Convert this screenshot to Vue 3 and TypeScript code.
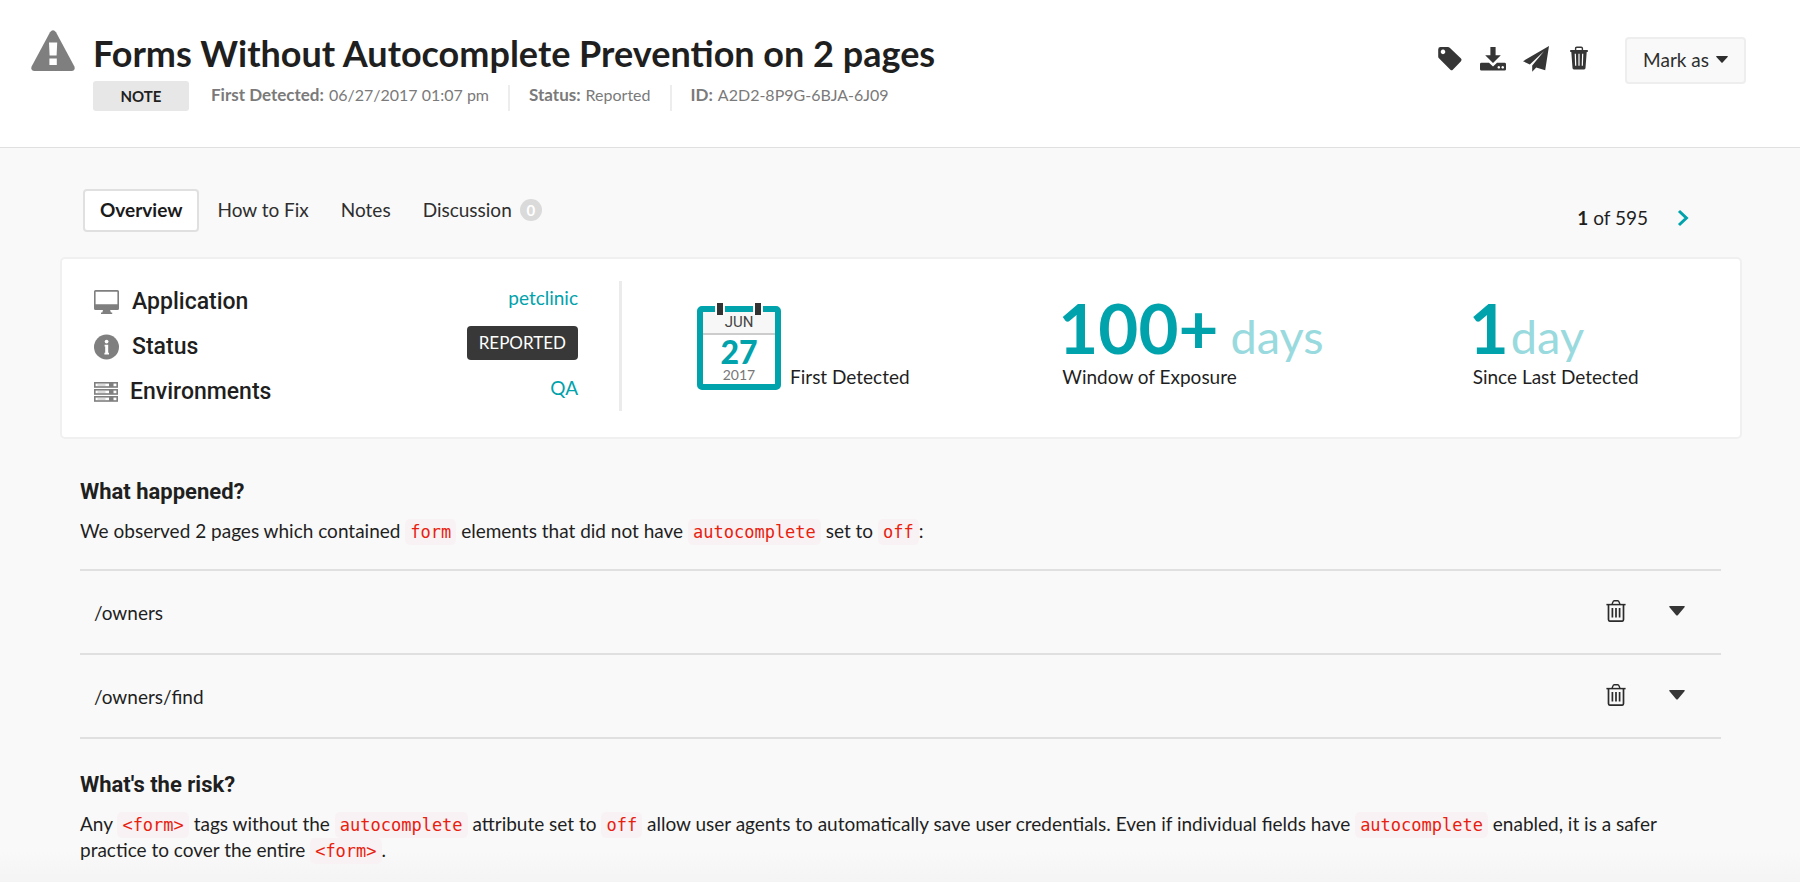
<script setup lang="ts">
import { ref } from 'vue'

interface Tab { id: string; label: string; count?: number }
interface Meta { label: string; value: string }

const tabs: Tab[] = [
  { id: 'overview', label: 'Overview' },
  { id: 'fix', label: 'How to Fix' },
  { id: 'notes', label: 'Notes' },
  { id: 'discussion', label: 'Discussion', count: 0 },
]
const active = ref('overview')

const meta: Meta[] = [
  { label: 'First Detected:', value: '06/27/2017 01:07 pm' },
  { label: 'Status:', value: 'Reported' },
  { label: 'ID:', value: 'A2D2-8P9G-6BJA-6J09' },
]
const paths: string[] = ['/owners', '/owners/find']
</script>

<template>
  <div class="page">
    <header class="header">
      <svg class="warn" viewBox="0 0 44 41" aria-hidden="true">
        <path d="M19 2.2Q22-1.6 25 2.2L43.4 36.6Q44.6 40.6 41 41H3Q-.6 40.6.6 36.6Z" fill="#7f7f7f" />
        <path d="M18 12.400h8.200l-.6 13.200h-7zM18.400 28.400h7.400v6.600h-7.400z" fill="#fff" />
      </svg>
      <div class="heading">
        <h1>Forms Without Autocomplete Prevention on 2 pages</h1>
        <div class="sub">
          <span class="severity">NOTE</span>
          <dl class="meta">
            <div v-for="m in meta" :key="m.label">
              <dt>{{ m.label }}</dt>
              <dd>{{ m.value }}</dd>
            </div>
          </dl>
        </div>
      </div>
      <div class="tools">
        <button type="button" class="icon" aria-label="Tag">
          <svg viewBox="0 0 26 26" width="26" height="26"><path fill-rule="evenodd" d="M3.6 1h7.2q1.2 0 2.2 1L24 12.6q1.2 1.3 0 2.6l-8.2 8.6q-1.2 1.1-2.4 0L2.2 12.6q-1-1-1-2.2V3.4Q1.2 1 3.6 1zM6 3.6a2.3 2.3 0 1 0 .01 0z" fill="#363636" /></svg>
        </button>
        <button type="button" class="icon" aria-label="Download">
          <svg viewBox="0 0 26 26" width="26" height="26">
            <path d="M10.400 1h5.200v8.200h5.200L13 17 5.200 9.200h5.200z" fill="#363636" />
            <path fill-rule="evenodd" d="M1.400 16.800H9l4 3.600 4-3.600h7.600q1.400 0 1.400 1.400v5Q26 24.600 24.600 24.600H1.400Q0 24.600 0 23.200v-5q0-1.400 1.400-1.400zM18.800 20a1.300 1.300 0 1 0 .01 0zM22.700 20a1.300 1.300 0 1 0 .01 0z" fill="#363636" />
          </svg>
        </button>
        <button type="button" class="icon" aria-label="Send">
          <svg viewBox="0 0 26 26" width="26" height="26"><path d="M26 0L0 15.200l6.800 3.200L21.200 5 9.200 19.600v6.200l4-4.200 9 2.600z" fill="#363636" /></svg>
        </button>
        <button type="button" class="icon" aria-label="Delete">
          <svg viewBox="0 0 26 26" width="26" height="26">
            <path d="M9.600 4V2.400q0-1.200 1.200-1.200h4.400q1.200 0 1.200 1.200V4" fill="none" stroke="#363636" stroke-width="1.400" />
            <path d="M4.200 4h17.600v1.900h-1.100l-1.200 16.200q-.1 1.300-1.400 1.300H7.900q-1.300 0-1.400-1.300L5.300 5.900H4.200z" fill="#363636" />
            <path d="M9.300 7.800l.4 12M13 7.800v12M16.700 7.800l-.4 12" stroke="#fff" stroke-width="1.200" />
          </svg>
        </button>
      </div>
      <button type="button" class="mark">
        Mark as
        <svg viewBox="0 0 12 7" width="12" height="7" aria-hidden="true"><path d="M.6 0h10.800q.8.400.2 1L6.600 6.500q-.6.500-1.200 0L.4 1Q-.2.400.6 0z" fill="#2e2e2e" /></svg>
      </button>
    </header>

    <main class="body">
      <div class="bar">
        <nav class="tabs" aria-label="Sections">
          <button
            v-for="t in tabs"
            :key="t.id"
            type="button"
            :class="['tab', { on: active === t.id }]"
            @click="active = t.id"
          >
            {{ t.label }}<span v-if="t.count !== undefined" class="count">{{ t.count }}</span>
          </button>
        </nav>
        <div class="pager">
          <span><b>1</b> of 595</span>
          <button type="button" class="next" aria-label="Next">
            <svg viewBox="0 0 12 18" width="12" height="18"><path d="M2 2l7.400 7L2 16" fill="none" stroke="#00a2ab" stroke-width="3" /></svg>
          </button>
        </div>
      </div>

      <section class="card">
        <dl class="facts">
          <div>
            <dt>
              <svg viewBox="0 0 26 24" width="26" height="24" aria-hidden="true">
                <path fill-rule="evenodd" d="M1.500 0h22q1.500 0 1.500 1.500v17q0 1.500-1.500 1.500h-7.400l.8 2.400h1.300V24H7v-1.600h1.300L9 20H1.500Q0 20 0 18.500v-17Q0 0 1.500 0zM1.600 1.700v12.600h21.800V1.700z" fill="#7f7f7f" />
              </svg>
              Application
            </dt>
            <dd><a href="#">petclinic</a></dd>
          </div>
          <div>
            <dt>
              <svg viewBox="0 0 26 26" width="26" height="26" aria-hidden="true">
                <circle cx="12.500" cy="13" r="12.500" fill="#7f7f7f" />
                <circle cx="12.600" cy="7.600" r="1.900" fill="#fff" />
                <path d="M10.600 10.800h3.600v8h.8v1.600h-4.600v-1.600h.8v-6.400h-.6z" fill="#fff" />
              </svg>
              Status
            </dt>
            <dd><span class="state">REPORTED</span></dd>
          </div>
          <div>
            <dt>
              <svg viewBox="0 0 24 20" width="24" height="20" aria-hidden="true">
                <g v-for="y in [0, 7, 14]" :key="y">
                  <rect x=".8" :y="y + 0.8" width="22.400" height="4.200" fill="#fff" stroke="#7f7f7f" stroke-width="1.600" />
                  <path :d="`M3.500 ${y + 3}h8`" stroke="#b8b8b8" stroke-width="1" />
                  <rect x="15" :y="y + 1" width="4.500" height="4" fill="#7f7f7f" />
                </g>
              </svg>
              Environments
            </dt>
            <dd><a href="#">QA</a></dd>
          </div>
        </dl>
        <div class="stats">
          <div class="stat first">
            <div class="calendar">
              <i class="ring"></i><i class="ring right"></i>
              <span class="month">JUN</span>
              <span class="day">27</span>
              <span class="year">2017</span>
            </div>
            <span class="caption">First Detected</span>
          </div>
          <div class="stat">
            <div class="figure"><strong>100+</strong><span class="wide">days</span></div>
            <span class="caption">Window of Exposure</span>
          </div>
          <div class="stat">
            <div class="figure"><strong>1</strong><span>day</span></div>
            <span class="caption">Since Last Detected</span>
          </div>
        </div>
      </section>

      <section class="text">
        <h2>What happened?</h2>
        <p>We observed 2 pages which contained <code>form</code> elements that did not have <code>autocomplete</code> set to <code>off</code>:</p>
        <ul class="paths">
          <li v-for="p in paths" :key="p">
            <span class="path">{{ p }}</span>
            <button type="button" class="row-btn" :aria-label="`Delete ${p}`">
              <svg viewBox="0 0 20 22" width="20" height="22">
                <g fill="none" stroke="#2b2b2b">
                  <path d="M.4 4.600h19.200" stroke-width="1.500" />
                  <path d="M6 4.400l1-2.600q.3-1 1.300-1h3.400q1 0 1.300 1l1 2.600" stroke-width="1.400" />
                  <path d="M2.500 4.600v14.800q0 1.800 1.800 1.800h11.400q1.800 0 1.800-1.800V4.600" stroke-width="1.700" />
                  <path d="M6.400 8v9.400M10 8v9.400M13.600 8v9.400" stroke-width="1.700" />
                </g>
              </svg>
            </button>
            <button type="button" class="row-btn" :aria-label="`Expand ${p}`">
              <svg viewBox="0 0 16 10" width="16" height="10"><path d="M.8 0h14.400q1 .5.300 1.300L8.800 9.200q-.8.700-1.600 0L.5 1.300Q-.2.500.8 0z" fill="#363636" /></svg>
            </button>
          </li>
        </ul>
        <h2>What's the risk?</h2>
        <p>Any <code>&lt;form&gt;</code> tags without the <code>autocomplete</code> attribute set to <code>off</code> allow user agents to automatically save user credentials. Even if individual fields have <code>autocomplete</code> enabled, it is a safer practice to cover the entire <code>&lt;form&gt;</code>.</p>
      </section>
    </main>
  </div>
</template>

<style>
body { margin: 0; background: #f9f9f9; }
</style>

<style scoped>
* { box-sizing: border-box; }
.page {
  display: flex;
  flex-direction: column;
  min-height: 100vh;
  font-family: Lato, "Liberation Sans", sans-serif;
  font-size: 19px;
  line-height: 26px;
  color: #1f1f1f;
}
h1, h2, p, dl, dd, ul { margin: 0; padding: 0; }
button { padding: 0; border: 0; background: none; font: inherit; color: inherit; cursor: pointer; }
svg { display: block; flex: none; }
a { color: #00a2ab; text-decoration: none; }

.header {
  display: flex;
  align-items: flex-start;
  padding: 30px 54px 36px 31px;
  background: #fff;
  border-bottom: 1px solid #e0e0e0;
}
.warn { width: 44px; height: 41px; margin-right: 18px; }
.heading { flex: 1; }
h1 { font-size: 36px; line-height: 46px; font-weight: 700; }
.sub { display: flex; margin-top: 5px; }
.severity {
  width: 96px;
  height: 30px;
  border-radius: 3px;
  background: #e7e7e7;
  font-size: 15px;
  line-height: 30px;
  font-weight: 700;
  text-align: center;
}
.meta { display: flex; margin: 4px 0 0 22px; font-size: 16px; line-height: 19px; color: #7a7a7a; }
.meta div { display: flex; align-items: baseline; gap: 5px; padding-right: 19px; }
.meta div + div { padding-left: 19px; border-left: 2px solid #ededed; }
.meta dt { font-size: 17px; font-weight: 700; }
.tools { display: flex; gap: 17px; margin: 16px 33px 0 0; }
.icon { width: 26px; height: 26px; }
.mark {
  display: flex;
  align-items: center;
  gap: 7px;
  height: 47px;
  margin-top: 7px;
  padding: 0 16px 2px;
  border: 2px solid #eee;
  border-radius: 4px;
  background: #f9f9f9;
  color: #2e2e2e;
}

.body { flex: 1; padding: 41px 58px 20px 60px; background: linear-gradient(to top, #f4f4f4, #f9f9f9 32px); }
.bar { display: flex; justify-content: space-between; padding: 0 53px 0 23px; }
.tabs { display: flex; }
.tab { display: flex; align-items: center; height: 43px; padding: 0 16px 2px; color: #2e2e2e; }
.tab.on { margin-right: 2px; padding: 0 15px 2px; border: 2px solid #e0e0e0; border-radius: 4px; background: #fff; font-weight: 700; color: #1a1a1a; }
.count { width: 22px; height: 22px; margin-left: 8px; border-radius: 50%; background: #dadada; color: #fff; font-size: 15px; line-height: 22px; font-weight: 700; }
.pager { display: flex; align-items: center; gap: 29px; margin-top: 14px; }

.card {
  display: flex;
  align-items: flex-start;
  min-height: 182px;
  margin-top: 25px;
  padding: 22px 0 26px 32px;
  border: 2px solid #f0f0f0;
  border-radius: 5px;
  background: #fff;
}
.facts { width: 528px; height: 130px; padding-right: 41px; border-right: 3px solid #ebebeb; }
.facts div { display: flex; justify-content: space-between; align-items: flex-start; height: 45px; }
.facts dt { display: flex; align-items: center; gap: 12px; height: 41px; font-family: Roboto, sans-serif; font-weight: 500; font-size: 23px; }
.facts dd { line-height: 34px; }
.state { display: block; padding: 0 12px; border-radius: 4px; background: #383838; color: #fff; font-size: 17px; line-height: 34px; }
.stats { flex: 1; display: grid; grid-template-columns: 365fr 410fr 267fr; padding: 23px 0 0 75px; }
.stat { display: flex; flex-direction: column; }
.first { flex-direction: row; align-items: flex-end; gap: 9px; }
.calendar {
  position: relative;
  display: flex;
  flex-direction: column;
  align-items: center;
  width: 84px;
  height: 84px;
  border: 6px solid #00a2ab;
  border-radius: 5px;
  text-align: center;
}
.ring { position: absolute; top: -9px; left: 12px; width: 6px; height: 12px; background: #333; border: solid #fff; border-width: 0 2px; box-sizing: content-box; }
.ring.right { left: auto; right: 12px; }
.month { width: 100%; height: 23px; border-bottom: 2px solid #ccc; background: #f7f7f7; font: 15px/21px Roboto, sans-serif; color: #444; }
.day { font-size: 32px; line-height: 34px; font-weight: 900; color: #00a2ab; }
.year { font-size: 14px; line-height: 12px; color: #777; }
.figure { display: flex; align-items: baseline; gap: 2px; height: 60px; margin-left: -4px; line-height: 48px; color: #00a2ab; }
.figure strong { font-size: 69px; font-weight: 700; }
.figure span { font-size: 47px; color: #99dade; }
.figure .wide { margin-left: 10px; }

.text { padding: 40px 21px 0 20px; }
h2 { font: 700 22px/26px Roboto, sans-serif; }
p { margin-top: 13px; }
code { padding: 3px 5px; border-radius: 5px; background: #f9f2f4; color: #e8210f; font-family: "DejaVu Sans Mono", monospace; font-size: 17px; line-height: 20px; }
.paths { margin: 25px 0 33px; list-style: none; border-top: 2px solid #e0e0e0; }
.paths li { display: flex; align-items: center; height: 84px; padding: 0 36px 2px 14px; border-bottom: 2px solid #e0e0e0; }
.path { flex: 1; padding-top: 4px; }
.row-btn + .row-btn { margin-left: 43px; }
</style>
